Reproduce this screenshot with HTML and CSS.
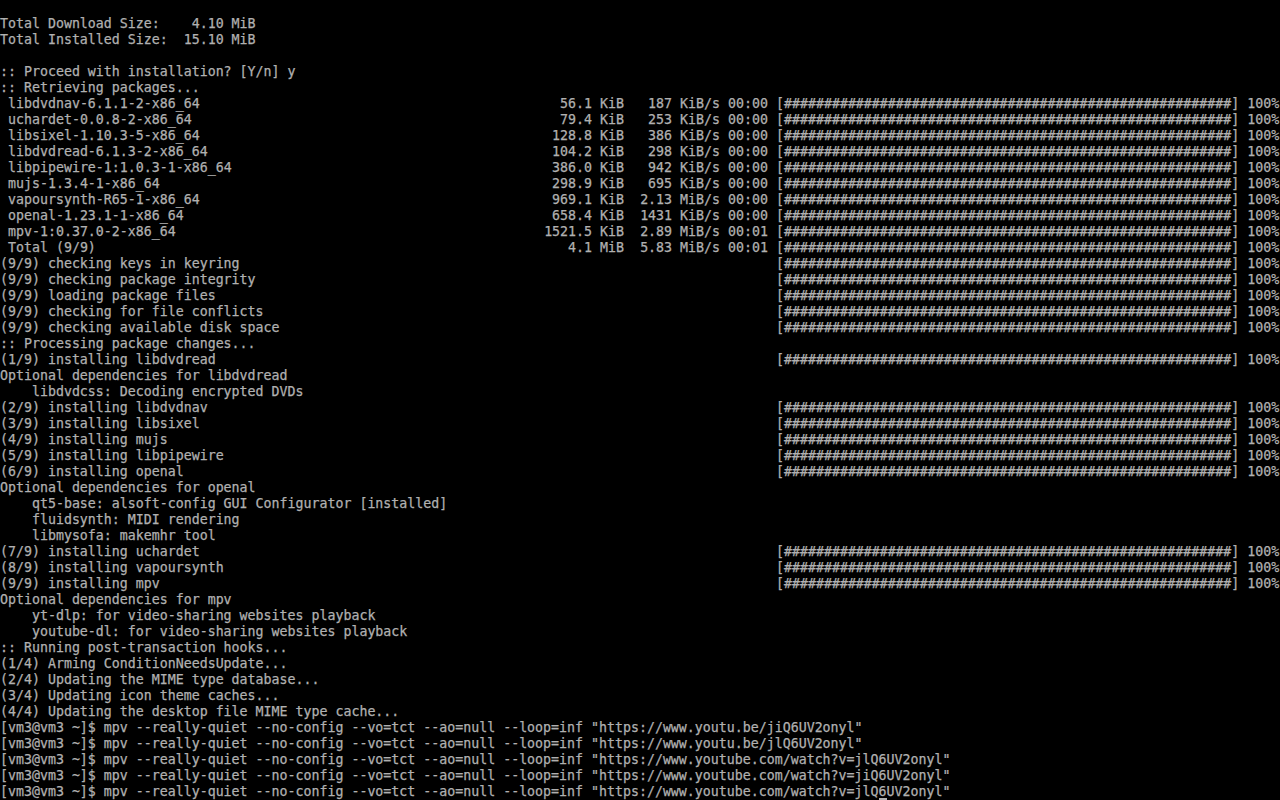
FILE: index.html
```html
<!DOCTYPE html>
<html>
<head>
<meta charset="utf-8">
<title>tty</title>
<link rel="stylesheet" href="styles.css">
</head>
<body>
<div class="term">
<div class="ln"> </div>
<div class="ln">Total Download Size:    4.10 MiB</div>
<div class="ln">Total Installed Size:  15.10 MiB</div>
<div class="ln"> </div>
<div class="ln">:: Proceed with installation? [Y/n] y</div>
<div class="ln">:: Retrieving packages...</div>
<div class="row"><span class="name">libdvdnav-6.1.1-2-x86_64</span><span class="size">56.1 KiB</span><span class="rate">187 KiB/s</span><span class="time">00:00</span><span class="bar">[########################################################] 100%</span></div>
<div class="row"><span class="name">uchardet-0.0.8-2-x86_64</span><span class="size">79.4 KiB</span><span class="rate">253 KiB/s</span><span class="time">00:00</span><span class="bar">[########################################################] 100%</span></div>
<div class="row"><span class="name">libsixel-1.10.3-5-x86_64</span><span class="size">128.8 KiB</span><span class="rate">386 KiB/s</span><span class="time">00:00</span><span class="bar">[########################################################] 100%</span></div>
<div class="row"><span class="name">libdvdread-6.1.3-2-x86_64</span><span class="size">104.2 KiB</span><span class="rate">298 KiB/s</span><span class="time">00:00</span><span class="bar">[########################################################] 100%</span></div>
<div class="row"><span class="name">libpipewire-1:1.0.3-1-x86_64</span><span class="size">386.0 KiB</span><span class="rate">942 KiB/s</span><span class="time">00:00</span><span class="bar">[########################################################] 100%</span></div>
<div class="row"><span class="name">mujs-1.3.4-1-x86_64</span><span class="size">298.9 KiB</span><span class="rate">695 KiB/s</span><span class="time">00:00</span><span class="bar">[########################################################] 100%</span></div>
<div class="row"><span class="name">vapoursynth-R65-1-x86_64</span><span class="size">969.1 KiB</span><span class="rate">2.13 MiB/s</span><span class="time">00:00</span><span class="bar">[########################################################] 100%</span></div>
<div class="row"><span class="name">openal-1.23.1-1-x86_64</span><span class="size">658.4 KiB</span><span class="rate">1431 KiB/s</span><span class="time">00:00</span><span class="bar">[########################################################] 100%</span></div>
<div class="row"><span class="name">mpv-1:0.37.0-2-x86_64</span><span class="size">1521.5 KiB</span><span class="rate">2.89 MiB/s</span><span class="time">00:01</span><span class="bar">[########################################################] 100%</span></div>
<div class="row"><span class="name">Total (9/9)</span><span class="size">4.1 MiB</span><span class="rate">5.83 MiB/s</span><span class="time">00:01</span><span class="bar">[########################################################] 100%</span></div>
<div class="row"><span>(9/9) checking keys in keyring</span><span class="bar">[########################################################] 100%</span></div>
<div class="row"><span>(9/9) checking package integrity</span><span class="bar">[########################################################] 100%</span></div>
<div class="row"><span>(9/9) loading package files</span><span class="bar">[########################################################] 100%</span></div>
<div class="row"><span>(9/9) checking for file conflicts</span><span class="bar">[########################################################] 100%</span></div>
<div class="row"><span>(9/9) checking available disk space</span><span class="bar">[########################################################] 100%</span></div>
<div class="ln">:: Processing package changes...</div>
<div class="row"><span>(1/9) installing libdvdread</span><span class="bar">[########################################################] 100%</span></div>
<div class="ln">Optional dependencies for libdvdread</div>
<div class="ln">    libdvdcss: Decoding encrypted DVDs</div>
<div class="row"><span>(2/9) installing libdvdnav</span><span class="bar">[########################################################] 100%</span></div>
<div class="row"><span>(3/9) installing libsixel</span><span class="bar">[########################################################] 100%</span></div>
<div class="row"><span>(4/9) installing mujs</span><span class="bar">[########################################################] 100%</span></div>
<div class="row"><span>(5/9) installing libpipewire</span><span class="bar">[########################################################] 100%</span></div>
<div class="row"><span>(6/9) installing openal</span><span class="bar">[########################################################] 100%</span></div>
<div class="ln">Optional dependencies for openal</div>
<div class="ln">    qt5-base: alsoft-config GUI Configurator [installed]</div>
<div class="ln">    fluidsynth: MIDI rendering</div>
<div class="ln">    libmysofa: makemhr tool</div>
<div class="row"><span>(7/9) installing uchardet</span><span class="bar">[########################################################] 100%</span></div>
<div class="row"><span>(8/9) installing vapoursynth</span><span class="bar">[########################################################] 100%</span></div>
<div class="row"><span>(9/9) installing mpv</span><span class="bar">[########################################################] 100%</span></div>
<div class="ln">Optional dependencies for mpv</div>
<div class="ln">    yt-dlp: for video-sharing websites playback</div>
<div class="ln">    youtube-dl: for video-sharing websites playback</div>
<div class="ln">:: Running post-transaction hooks...</div>
<div class="ln">(1/4) Arming ConditionNeedsUpdate...</div>
<div class="ln">(2/4) Updating the MIME type database...</div>
<div class="ln">(3/4) Updating icon theme caches...</div>
<div class="ln">(4/4) Updating the desktop file MIME type cache...</div>
<div class="ln">[vm3@vm3 ~]$ mpv --really-quiet --no-config --vo=tct --ao=null --loop=inf "https://www.youtu.be/jiQ6UV2onyl"</div>
<div class="ln">[vm3@vm3 ~]$ mpv --really-quiet --no-config --vo=tct --ao=null --loop=inf "https://www.youtu.be/jlQ6UV2onyl"</div>
<div class="ln">[vm3@vm3 ~]$ mpv --really-quiet --no-config --vo=tct --ao=null --loop=inf "https://www.youtube.com/watch?v=jlQ6UV2onyl"</div>
<div class="ln">[vm3@vm3 ~]$ mpv --really-quiet --no-config --vo=tct --ao=null --loop=inf "https://www.youtube.com/watch?v=jiQ6UV2onyl"</div>
<div class="ln">[vm3@vm3 ~]$ mpv --really-quiet --no-config --vo=tct --ao=null --loop=inf "https://www.youtube.com/watch?v=jlQ<span class="cur">6</span>UV2onyl"</div>
</div>
</body>
</html>
```

FILE: styles.css
```css
html, body {
  margin: 0;
  padding: 0;
  background: #000;
}

.term {
  width: 1280px;
  height: 800px;
  overflow: hidden;
  background: #000;
  color: #b0b0b0;
  font-family: "DejaVu Sans Mono", "Liberation Mono", monospace;
  font-size: 13.288px;
  line-height: 16px;
  -webkit-text-stroke: 0.25px #b0b0b0;
}

.ln {
  height: 16px;
  white-space: pre;
  overflow: hidden;
}

.row {
  display: flex;
  height: 16px;
  white-space: pre;
  overflow: hidden;
}

.name {
  width: 544px;
  padding-left: 8px;
  box-sizing: border-box;
  flex: none;
}

.size {
  width: 80px;
  text-align: right;
  flex: none;
}

.rate {
  width: 96px;
  text-align: right;
  flex: none;
}

.time {
  width: 48px;
  text-align: right;
  flex: none;
}

.bar {
  margin-left: auto;
  width: 504px;
  flex: none;
}

.cur {
  display: inline-block;
  height: 16px;
  vertical-align: top;
  box-shadow: inset 0 -2px 0 #b0b0b0;
}
```
